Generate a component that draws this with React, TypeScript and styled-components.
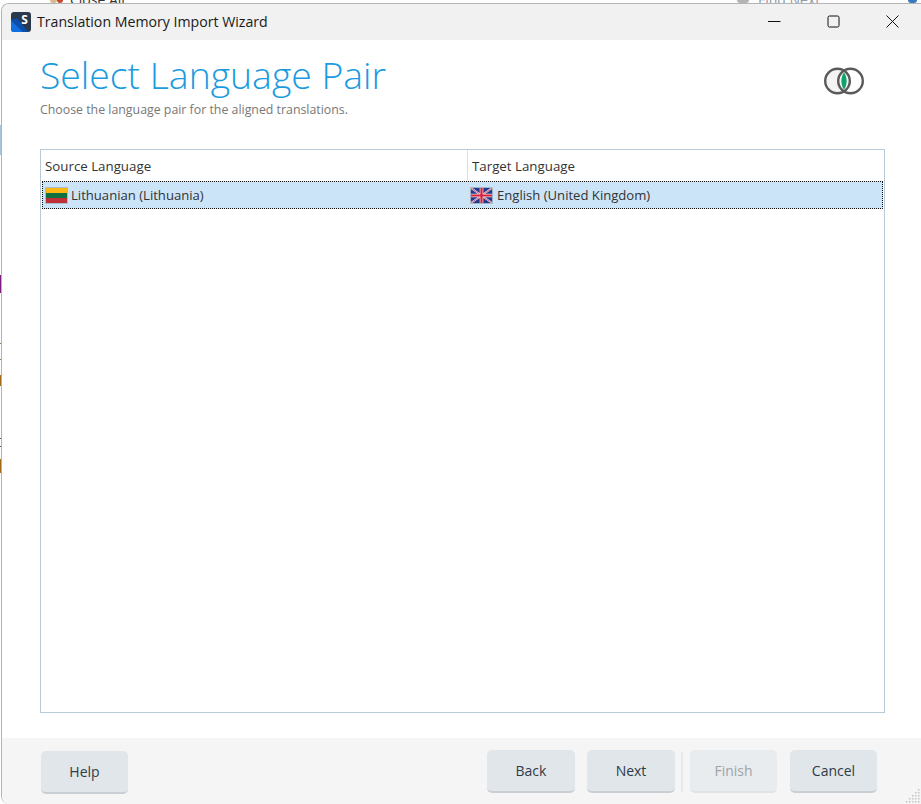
import React from "react"
import styled, { createGlobalStyle } from "styled-components"

const Global = createGlobalStyle`
  html, body { margin: 0; padding: 0; height: 100%; background: #fff; overflow: hidden; }
  #root { height: 100%; }
`

const Desktop = styled.div`
  position: relative;
  width: 921px;
  height: 804px;
  box-sizing: border-box;
  padding: 3px 0 0 1px;
  display: flex;
  overflow: hidden;
  background: #fdfdfd;
  font-family: "Open Sans", "Noto Sans", sans-serif;
`

const BehindText = styled.span<{ $left: number; $color: string }>`
  position: absolute;
  left: ${(p) => p.$left}px;
  top: -10px;
  font-size: 14px;
  color: ${(p) => p.$color};
`

const BehindIcon = styled.i<{ $left: number; $width: number; $color: string }>`
  position: absolute;
  left: ${(p) => p.$left}px;
  top: 0;
  width: ${(p) => p.$width}px;
  height: 3px;
  border-radius: 0 0 3px 3px;
  background: ${(p) => p.$color};
`

const BehindMark = styled.i<{ $top: number; $height: number; $color: string }>`
  position: absolute;
  left: 0;
  top: ${(p) => p.$top}px;
  width: 2px;
  height: ${(p) => p.$height}px;
  background: ${(p) => p.$color};
`

const Window = styled.div`
  position: relative;
  flex: 1;
  display: flex;
  flex-direction: column;
  background: #fff;
  border-left: 1px solid #b4b4b4;
  border-top: 1px solid #b4b4b4;
  border-top-left-radius: 8px;
  border-bottom-left-radius: 8px;
  overflow: hidden;
`

const TitleBar = styled.div`
  height: 36px;
  flex: none;
  display: flex;
  align-items: center;
  background: #f1f1f1;
  padding: 0 0 2px 9px;
  box-sizing: border-box;
`

const AppLogo = styled.svg`
  width: 20px;
  height: 20px;
  flex: none;
  margin-top: 1px;
`

const WindowTitle = styled.span`
  margin-left: 6px;
  font-size: 14.15px;
  color: #1a1a1a;
  flex: 1;
`

const Controls = styled.div`
  display: flex;
  align-items: center;
  padding-right: 22px;
  gap: 46px;
`

const ControlIcon = styled.svg`
  width: 13px;
  height: 13px;
  display: block;
`

const Main = styled.main`
  flex: 1;
  min-height: 0;
  display: flex;
  flex-direction: column;
  padding: 0 36px 25px 38px;
`

const Heading = styled.header`
  height: 109px;
  flex: none;
  display: flex;
  justify-content: space-between;
`

const TitleBlock = styled.div`
  padding-top: 9px;
`

const Title = styled.h1`
  margin: 0;
  font-size: 37.35px;
  line-height: 52px;
  font-weight: 300;
  color: #1a9be0;
`

const Subtitle = styled.p`
  margin: 1px 0 0;
  font-size: 12.35px;
  line-height: 16px;
  color: #787878;
`

const Venn = styled.svg`
  width: 42px;
  height: 30px;
  margin: 26px 20px 0 0;
`

const Table = styled.div`
  flex: 1;
  min-height: 0;
  border: 1px solid #b7cad6;
  display: flex;
  flex-direction: column;
`

const Columns = styled.div`
  display: grid;
  grid-template-columns: 426px 1fr;
`

const HeaderRow = styled(Columns)`
  height: 31px;
`

const HeaderCell = styled.div<{ $first?: boolean }>`
  display: flex;
  align-items: center;
  padding-left: 4px;
  font-size: 13.3px;
  color: #333;
  border-left: ${(p) => (p.$first ? "none" : "1px solid #e0e0e0")};
`

const DataRow = styled(Columns)`
  height: 28px;
  box-sizing: border-box;
  background: #cce4f8;
  outline: 1px dotted #111;
  outline-offset: -1px;
  margin: 0 1px;
`

const DataCell = styled.div<{ $first?: boolean }>`
  display: flex;
  align-items: center;
  gap: ${(p) => (p.$first ? 3 : 4)}px;
  padding-left: ${(p) => (p.$first ? 3 : 1)}px;
  font-size: 13.1px;
  color: #333;
  border-left: ${(p) => (p.$first ? "none" : "1px solid #d3dfe8")};
`

const Flag = styled.svg`
  width: 23px;
  height: 17px;
  flex: none;
  display: block;
`

const Footer = styled.footer`
  height: 66px;
  flex: none;
  box-sizing: border-box;
  background: #f5f5f5;
  display: flex;
  align-items: flex-start;
  padding: 13px 44px 0 39px;
`

const Button = styled.button<{ $width: number; $offset?: number }>`
  width: ${(p) => p.$width}px;
  height: 43px;
  margin-left: ${(p) => p.$offset ?? 0}px;
  box-sizing: border-box;
  border: none;
  border-bottom: 2px solid #c9cfd4;
  border-radius: 5px;
  background: #e1e6ea;
  color: #2f3b47;
  font-family: inherit;
  font-size: 14px;
  padding: 0;
  &:disabled {
    background: #e9ecef;
    border-bottom-color: #dfe3e6;
    color: #9ea3a8;
  }
`

const Spacer = styled.div`
  flex: 1;
`

const Buttons = styled.div`
  display: flex;
  align-items: center;
  margin-top: -1px;
`

const Divider = styled.div`
  width: 2px;
  height: 40px;
  background: #e6e8ea;
  margin: 0 7px 0 6px;
`

const Grip = styled.svg`
  position: absolute;
  right: 0;
  bottom: 0;
  width: 16px;
  height: 16px;
`

const gripDots = [
  [13, 1], [10, 4], [13, 4], [7, 7], [10, 7], [13, 7], [4, 10], [7, 10], [10, 10], [13, 10], [1, 13], [4, 13], [7, 13], [10, 13], [13, 13],
]

const behindMarks = [
  { top: 125, height: 30, color: "#a9c4d8" },
  { top: 275, height: 18, color: "#7d1a7d" },
  { top: 343, height: 1, color: "#8a7a55" },
  { top: 359, height: 1, color: "#8a7a55" },
  { top: 375, height: 11, color: "#a06a1c" },
  { top: 438, height: 1, color: "#555" },
  { top: 446, height: 1, color: "#555" },
  { top: 459, height: 14, color: "#a06a1c" },
]

function LithuaniaFlag() {
  return (
    <Flag viewBox="0 0 23 17">
      <rect width="23" height="17" rx="1" fill="#a9bccb" />
      <rect x="1" y="1" width="21" height="5" fill="#fdb913" />
      <rect x="1" y="6" width="21" height="5" fill="#11703f" />
      <rect x="1" y="11" width="21" height="5" fill="#be2f37" />
    </Flag>
  )
}

function UkFlag() {
  return (
    <Flag viewBox="0 0 23 17">
      <rect width="23" height="17" rx="1" fill="#9fb2c8" />
      <rect x="1" y="1" width="21" height="15" fill="#23398f" />
      <path d="M1 1 22 16M22 1 1 16" stroke="#e6dbe4" strokeWidth="1.8" />
      <path d="M1 1 22 16M22 1 1 16" stroke="#cf3a4e" strokeWidth="0.7" />
      <path d="M11.5 1V16M1 8.5H22" stroke="#efe3e8" strokeWidth="3.6" />
      <path d="M11.5 1V16M1 8.5H22" stroke="#d8203a" strokeWidth="2.2" />
    </Flag>
  )
}

export default function App() {
  return (
    <Desktop>
      <Global />
      <BehindIcon $left={50} $width={7} $color="#d8b98a" />
      <BehindIcon $left={57} $width={6} $color="#c8452f" />
      <BehindText $left={70} $color="#333">Close All</BehindText>
      <BehindIcon $left={737} $width={12} $color="#b4b4b4" />
      <BehindText $left={758} $color="#8d99a8">Find Next</BehindText>
      <BehindIcon $left={908} $width={9} $color="#3a78c0" />
      {behindMarks.map((m) => (
        <BehindMark key={m.top} $top={m.top} $height={m.height} $color={m.color} />
      ))}
      <Window>
        <TitleBar>
          <AppLogo viewBox="0 0 20 20">
            <rect width="20" height="20" rx="3" fill="#2a3a4c" />
            <path d="M0 8 12 20H3a3 3 0 0 1-3-3Z" fill="#0f6fe0" />
            <path d="M0 8 6 6 17 20H12Z" fill="#0a4fb0" />
            <text x="13.5" y="11.5" fontSize="12" fontWeight="700" fill="#fff" textAnchor="middle" fontFamily="Open Sans">S</text>
          </AppLogo>
          <WindowTitle>Translation Memory Import Wizard</WindowTitle>
          <Controls>
            <ControlIcon viewBox="0 0 13 13">
              <path d="M0 6.5H12.5" stroke="#111" strokeWidth="1" />
            </ControlIcon>
            <ControlIcon viewBox="0 0 13 13">
              <rect x="1" y="1" width="11" height="11" rx="1.5" fill="none" stroke="#111" strokeWidth="1" />
            </ControlIcon>
            <ControlIcon viewBox="0 0 13 13">
              <path d="M.5.5 12.5 12.5M12.5.5.5 12.5" stroke="#111" strokeWidth="1" />
            </ControlIcon>
          </Controls>
        </TitleBar>
        <Main>
          <Heading>
            <TitleBlock>
              <Title>Select Language Pair</Title>
              <Subtitle>Choose the language pair for the aligned translations.</Subtitle>
            </TitleBlock>
            <Venn viewBox="0 0 42 30">
              <circle cx="14.5" cy="15" r="12.3" fill="#f4f4f4" stroke="#5a5a5a" strokeWidth="2.4" />
              <circle cx="27.5" cy="15" r="12.3" fill="none" stroke="#5a5a5a" strokeWidth="2.4" />
              <path d="M21 6.5C24.5 11 24.5 19 21 23.5 17.5 19 17.5 11 21 6.5Z" fill="#0ea56b" />
            </Venn>
          </Heading>
          <Table>
            <HeaderRow>
              <HeaderCell $first>Source Language</HeaderCell>
              <HeaderCell>Target Language</HeaderCell>
            </HeaderRow>
            <DataRow>
              <DataCell $first>
                <LithuaniaFlag />
                Lithuanian (Lithuania)
              </DataCell>
              <DataCell>
                <UkFlag />
                English (United Kingdom)
              </DataCell>
            </DataRow>
          </Table>
        </Main>
        <Footer>
          <Button $width={87}>Help</Button>
          <Spacer />
          <Buttons>
            <Button $width={88}>Back</Button>
            <Button $width={88} $offset={12}>Next</Button>
            <Divider />
            <Button $width={87} disabled>Finish</Button>
            <Button $width={87} $offset={13}>Cancel</Button>
          </Buttons>
        </Footer>
        <Grip viewBox="0 0 16 16">
          {gripDots.map(([x, y]) => (
            <rect key={`${x}-${y}`} x={x} y={y} width="1.5" height="1.5" fill="#c4c4c4" />
          ))}
        </Grip>
      </Window>
    </Desktop>
  )
}
